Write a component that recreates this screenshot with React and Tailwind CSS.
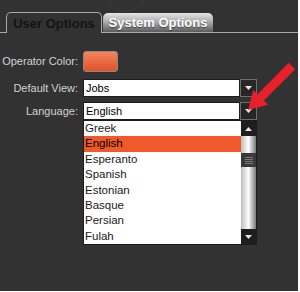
import React from "react";

const font = { fontFamily: '"Liberation Sans", Arial, sans-serif' };

function DownBtn({ className = "" }) {
  return (
    <div className={"flex w-[17px] items-center justify-center border border-[#6e6e6e] bg-[#262626] " + className}>
      <svg width="7" height="4" viewBox="0 0 7 4"><path d="M0 0H7L3.5 4Z" fill="#e8e8e8" /></svg>
    </div>
  );
}

export default function App() {
  const langs = ["Greek", "English", "Esperanto", "Spanish", "Estonian", "Basque", "Persian", "Fulah"];
  return (
    <div className="w-[300px] h-[292px] bg-white" style={font}>
      <div className="relative w-[298px] h-[291px] bg-[#323232] overflow-hidden">
        <svg className="absolute left-[104px] top-[-14px]" width="44" height="28" viewBox="0 0 44 28">
          <ellipse cx="22" cy="8" rx="19" ry="17" fill="none" stroke="#3e3e3e" strokeWidth="1" />
        </svg>
        {/* tabs */}
        <div className="flex items-end pt-[12px] pl-[6px] h-[33px] border-b border-[#a9a9a9]">
          <div className="relative z-10 -mb-px h-[21px] w-[96px] rounded-t-[5px] border border-b-0 border-[#a9a9a9] bg-[#323232] flex items-center justify-center">
            <span className="text-[13px] font-bold text-[#141414] leading-none">User Options</span>
          </div>
          <div className="h-[19px] w-[110px] rounded-t-[5px] bg-gradient-to-b from-[#e6e6e6] via-[#a8a8a8] to-[#5c5c5c] flex items-center justify-center ml-[1px]">
            <span className="text-[13px] font-bold text-white leading-none [text-shadow:0_1px_1px_rgba(0,0,0,0.5)]">System Options</span>
          </div>
        </div>
        {/* form */}
        <div className="mt-[18px] flex flex-col text-[11px]">
          <div className="flex items-center h-[21px]">
            <div className="w-[78px] text-right text-[#d2d2d2]">Operator Color:</div>
            <div className="ml-[5px] h-[21px] w-[35px] rounded-[3px] border border-[#8a8a8a] bg-gradient-to-b from-[#f4835c] to-[#de5228]" />
          </div>
          <div className="flex items-center h-[18px] mt-[7px]">
            <div className="w-[78px] text-right text-[#d2d2d2]">Default View:</div>
            <div className="ml-[5px] flex h-[18px]">
              <div className="w-[157px] bg-white border border-[#1c1c1c] pl-[2px] text-black leading-[16px]">Jobs</div>
              <DownBtn />
            </div>
          </div>
          <div className="flex items-center h-[18px] mt-[5px]">
            <div className="w-[78px] text-right text-[#d2d2d2]">Language:</div>
            <div className="ml-[5px] flex h-[18px]">
              <div className="w-[157px] bg-white border border-[#1c1c1c] pl-[2px] text-black leading-[16px]">English</div>
              <DownBtn />
            </div>
          </div>
          <div className="ml-[83px] flex h-[125px] w-[174px] border border-[#1c1c1c]">
            <div className="flex-1 bg-white flex flex-col">
              {langs.map((l) => (
                <div
                  key={l}
                  className={
                    "h-[15.4px] pl-[1px] leading-[15.4px] text-[11.5px] " +
                    (l === "English" ? "bg-[#f05a28] text-black" : "text-[#1a1a1a]")
                  }
                >
                  {l}
                </div>
              ))}
            </div>
            <div className="w-[15px] flex flex-col bg-[#1e1e1e]">
              <div className="h-[15px] flex items-center justify-center">
                <svg width="7" height="4" viewBox="0 0 7 4"><path d="M0 4H7L3.5 0Z" fill="#e8e8e8" /></svg>
              </div>
              <div className="flex-1 flex flex-col bg-gradient-to-r from-[#bdbdbd] via-[#ffffff] to-[#7a7a7a]">
                <div className="h-[17px]" />
                <div className="h-[14px] bg-[#3a3a3a] flex flex-col items-center justify-center gap-[1px]">
                  <div className="w-[8px] h-px bg-[#7a7a7a]" />
                  <div className="w-[8px] h-px bg-[#7a7a7a]" />
                  <div className="w-[8px] h-px bg-[#7a7a7a]" />
                  <div className="w-[8px] h-px bg-[#7a7a7a]" />
                </div>
              </div>
              <div className="h-[15px] flex items-center justify-center">
                <svg width="7" height="4" viewBox="0 0 7 4"><path d="M0 0H7L3.5 4Z" fill="#e8e8e8" /></svg>
              </div>
            </div>
          </div>
        </div>
        {/* red arrow */}
        <svg className="absolute left-0 top-0" width="298" height="291" viewBox="0 0 298 291">
          <polygon
            points="295.2,69.2 288.8,62.8 257.6,94.2 253.3,89.9 248,110 268.1,104.7 263.8,100.4"
            fill="#e8202a"
          />
        </svg>
      </div>
    </div>
  );
}
